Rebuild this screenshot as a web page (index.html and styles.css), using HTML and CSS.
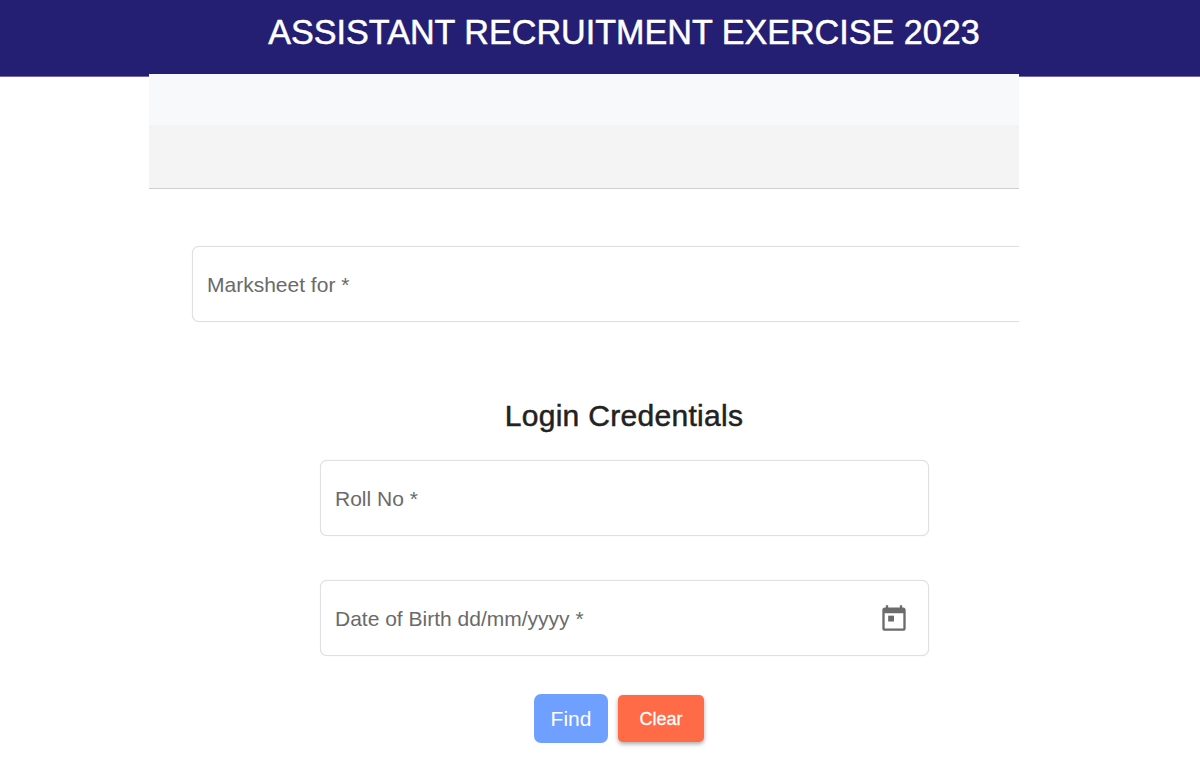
FILE: index.html
```html
<!DOCTYPE html>
<html lang="en">
<head>
    <meta charset="UTF-8">
    <meta name="viewport" content="width=device-width, initial-scale=1.0">
    <title>Assistant Recruitment Exercise 2023</title>
    <link rel="stylesheet" href="styles.css">
</head>
<body>

    <header class="top-bar">
        <h1>ASSISTANT RECRUITMENT EXERCISE 2023</h1>
    </header>

    <main class="page">
        <!-- Empty tab bands -->
        <div class="band-light"></div>
        <div class="band-grey"></div>

        <div class="field field-wide">
            <span class="field-label">Marksheet for *</span>
        </div>

        <h2>Login Credentials</h2>

        <div class="login-form">
            <div class="field">
                <span class="field-label">Roll No *</span>
            </div>
            <div class="field">
                <span class="field-label">Date of Birth dd/mm/yyyy *</span>
                <svg class="calendar-icon" viewBox="0 0 24 24" aria-hidden="true">
                    <path d="M20 3h-1V1h-2v2H7V1H5v2H4c-1.1 0-2 .9-2 2v16c0 1.100.9 2 2 2h16c1.100 0 2-.9 2-2V5c0-1.100-.9-2-2-2zm0 18H4V8h16v13z"/>
                    <path d="M7 10h5v5H7z"/>
                </svg>
            </div>
        </div>

        <div class="buttons">
            <button class="btn-find">Find</button>
            <button class="btn-clear">Clear</button>
        </div>
    </main>

</body>
</html>
```

FILE: styles.css
```css
/* Page */
body {
    margin: 0;
    background-color: #fff;
    font-family: "Liberation Sans", Arial, sans-serif;
    overflow: hidden;
}

.top-bar {
    height: 76px;
    background-color: #241f73;
    border-bottom: 1px solid #6f6bab;
    box-sizing: content-box;
    display: flex;
    justify-content: center;
}

.top-bar h1 {
    margin: 12px 0 0 48px;
    font-size: 34.15px;
    line-height: 40px;
    font-weight: 400;
    color: #fff;
    -webkit-text-stroke: 0.5px #fff;
}

/* Main column */
.page {
    position: relative;
    width: 870px;
    height: 691px;
    margin: -3px 0 0 149px;
    overflow: hidden;
}

.band-light {
    height: 51px;
    background-color: #f8f9fb;
}

.band-grey {
    height: 63px;
    background-color: #f4f4f4;
    border-bottom: 1px solid #cfcfcf;
}

/* Fields */
.field {
    box-sizing: border-box;
    height: 76px;
    background-color: #fff;
    border: 1px solid #e0e0e0;
    border-radius: 7px;
    box-shadow: 0 0 1px #d8d8d8;
    display: flex;
    align-items: center;
    justify-content: space-between;
    padding: 2px 20px 0 14px;
}

.field-wide {
    width: 900px;
    margin: 57px 0 0 43px;
}

.field-label {
    font-size: 21px;
    color: #6a6a6a;
}

.calendar-icon {
    width: 28px;
    height: 28px;
    margin-top: -2px;
    fill: #6b6b6b;
}

h2 {
    margin: 74px 0 0;
    padding-left: 80px;
    text-align: center;
    font-size: 30px;
    line-height: 40px;
    letter-spacing: 0.3px;
    font-weight: 400;
    color: #222;
    -webkit-text-stroke: 0.5px #222;
}

.login-form {
    display: flex;
    flex-direction: column;
    gap: 44px;
    width: 609px;
    margin: 24px 0 0 171px;
}

/* Buttons */
.buttons {
    display: flex;
    align-items: center;
    gap: 10px;
    margin: 38px 0 0 385px;
}

.buttons button {
    border: none;
    color: #fff;
    font-family: inherit;
}

.btn-find {
    width: 74px;
    height: 49px;
    border-radius: 7px;
    background-color: #6fa0ff;
    font-size: 21px;
}

.btn-clear {
    width: 86px;
    height: 47px;
    padding-top: 2px;
    border-radius: 5px;
    background-color: #ff6a47;
    font-size: 18px;
    -webkit-text-stroke: 0.3px #fff;
    box-shadow: 0 2px 4px rgba(0, 0, 0, 0.35);
}
```
